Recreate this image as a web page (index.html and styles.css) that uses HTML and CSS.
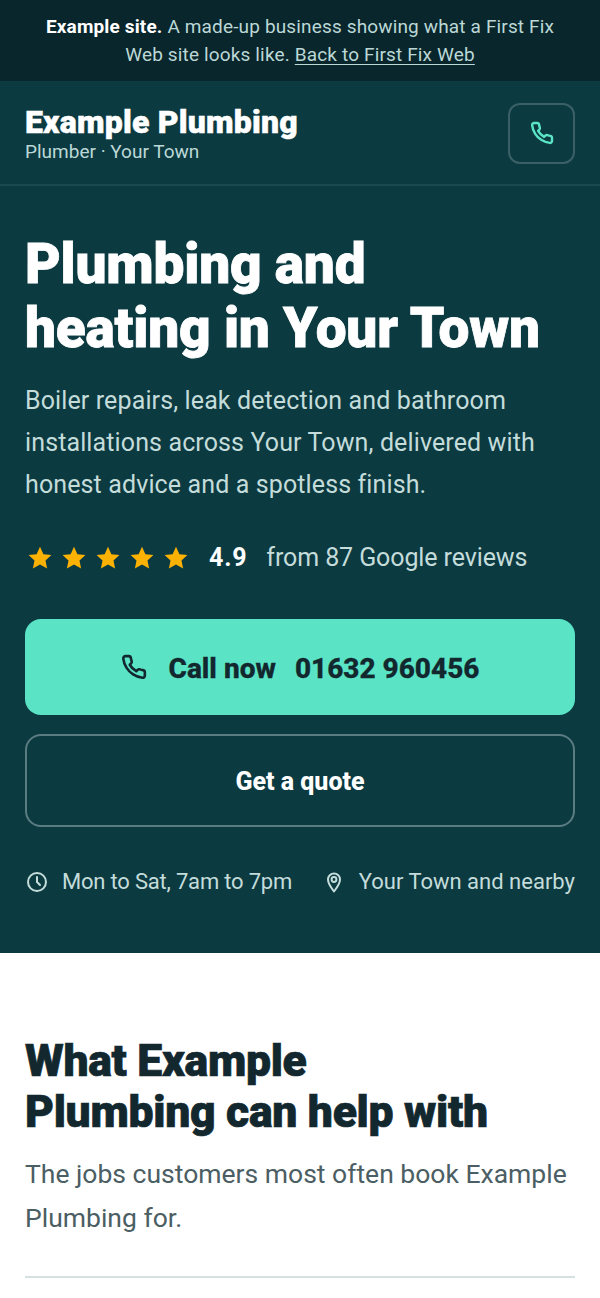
FILE: index.html
```html
<!DOCTYPE html>
<html lang="en">

<head>
    <meta charset="UTF-8">
    <meta name="viewport" content="width=device-width, initial-scale=1.0">
    <title>Example Plumbing</title>
    <link rel="stylesheet" href="styles.css">
</head>

<body>
    <div class="demoBar">
        <strong>Example site.</strong> A made-up business showing what a First Fix Web site looks like. <a href="#">Back to First Fix Web</a>
    </div>

    <header class="siteHeader">
        <div class="brand">
            <div class="brandName">Example Plumbing</div>
            <div class="brandSub">Plumber · Your Town</div>
        </div>
        <a class="headerCall" href="#" aria-label="Call">
            <svg class="icon" width="24" height="24" viewBox="0 0 24 24"><path d="M22 16.92v3a2 2 0 0 1-2.18 2 19.79 19.79 0 0 1-8.63-3.07 19.5 19.5 0 0 1-6-6 19.79 19.79 0 0 1-3.07-8.67A2 2 0 0 1 4.11 2h3a2 2 0 0 1 2 1.72 12.84 12.84 0 0 0 .7 2.81 2 2 0 0 1-.45 2.11L8.09 9.91a16 16 0 0 0 6 6l1.27-1.27a2 2 0 0 1 2.11-.45 12.84 12.84 0 0 0 2.81.7A2 2 0 0 1 22 16.92z"/></svg>
        </a>
    </header>

    <section class="hero">
        <h1>Plumbing and<br>heating in Your Town</h1>
        <p class="heroText">Boiler repairs, leak detection and bathroom installations across Your Town, delivered with honest advice and a spotless finish.</p>

        <div class="rating">
            <div class="stars">
                <svg width="24" height="24" viewBox="0 0 24 24"><path d="M12 0.8l3.4 7.4 8 .9-5.9 5.500 1.600 8L12 18.600l-7.100 4 1.600-8L.6 9.100l8-.9z"/></svg>
                <svg width="24" height="24" viewBox="0 0 24 24"><path d="M12 0.8l3.4 7.4 8 .9-5.9 5.500 1.600 8L12 18.600l-7.100 4 1.600-8L.6 9.100l8-.9z"/></svg>
                <svg width="24" height="24" viewBox="0 0 24 24"><path d="M12 0.8l3.4 7.4 8 .9-5.9 5.500 1.600 8L12 18.600l-7.100 4 1.600-8L.6 9.100l8-.9z"/></svg>
                <svg width="24" height="24" viewBox="0 0 24 24"><path d="M12 0.8l3.4 7.4 8 .9-5.9 5.500 1.600 8L12 18.600l-7.100 4 1.600-8L.6 9.100l8-.9z"/></svg>
                <svg width="24" height="24" viewBox="0 0 24 24"><path d="M12 0.8l3.4 7.4 8 .9-5.9 5.500 1.600 8L12 18.600l-7.100 4 1.600-8L.6 9.100l8-.9z"/></svg>
            </div>
            <strong>4.9</strong>
            <span>from 87 Google reviews</span>
        </div>

        <a class="btn btnCall" href="#">
            <svg class="icon" width="26" height="26" viewBox="0 0 24 24"><path d="M22 16.92v3a2 2 0 0 1-2.18 2 19.79 19.79 0 0 1-8.63-3.07 19.5 19.5 0 0 1-6-6 19.79 19.79 0 0 1-3.07-8.67A2 2 0 0 1 4.11 2h3a2 2 0 0 1 2 1.72 12.84 12.84 0 0 0 .7 2.81 2 2 0 0 1-.45 2.11L8.09 9.91a16 16 0 0 0 6 6l1.27-1.27a2 2 0 0 1 2.11-.45 12.84 12.84 0 0 0 2.81.7A2 2 0 0 1 22 16.92z"/></svg>
            <span class="callLabel">Call now</span>
            <span>01632 960456</span>
        </a>
        <a class="btn btnQuote" href="#">Get a quote</a>

        <div class="meta">
            <div class="metaItem">
                <svg class="icon" width="24" height="24" viewBox="0 0 24 24"><circle cx="12" cy="12" r="9"/><path d="M12 7v5l3 3"/></svg>
                <span>Mon to Sat, 7am to 7pm</span>
            </div>
            <div class="metaItem">
                <svg class="icon" width="24" height="24" viewBox="0 0 24 24"><path d="M12 21.500C8.500 17 6 13.500 6 9.500a6 6 0 0 1 12 0c0 4-2.500 7.500-6 12z"/><circle cx="12" cy="9.500" r="2.400"/></svg>
                <span>Your Town and nearby</span>
            </div>
        </div>
    </section>

    <section class="services">
        <h2>What Example<br>Plumbing can help with</h2>
        <p>The jobs customers most often book Example Plumbing for.</p>
        <hr>
    </section>
</body>

</html>
```

FILE: styles.css
```css
* {
    box-sizing: border-box;
}

body {
    margin: 0;
    background-color: #fff;
    color: #12282e;
    font-family: Roboto, "Liberation Sans", sans-serif;
}

a {
    color: inherit;
}

.icon {
    fill: none;
    stroke: currentColor;
    stroke-width: 2;
    stroke-linecap: round;
    stroke-linejoin: round;
    flex-shrink: 0;
}

/* Top strip */
.demoBar {
    height: 81px;
    padding: 13px 40px 0;
    background-color: #08262c;
    color: #bcd8d6;
    font-size: 19px;
    line-height: 28px;
    letter-spacing: 0.15px;
    text-align: center;
}

.demoBar strong {
    color: #fff;
}

.demoBar a {
    text-underline-offset: 3px;
}

/* Header */
.siteHeader {
    height: 105px;
    padding: 1px 25px 0;
    display: flex;
    justify-content: space-between;
    align-items: center;
    background-color: #0b3a41;
    border-bottom: 2px solid #1a4950;
}

.brand {
    margin-top: 2px;
}

.brandName {
    color: #fff;
    font-size: 32px;
    font-weight: 900;
    line-height: 34px;
    letter-spacing: 0.2px;
    -webkit-text-stroke: 0.5px #fff;
}

.brandSub {
    margin-top: 2px;
    color: #bcd8d6;
    font-size: 19px;
    line-height: 22px;
}

.headerCall {
    width: 67px;
    height: 61px;
    display: flex;
    align-items: center;
    justify-content: center;
    border: 2px solid #3a6066;
    border-radius: 12px;
    color: #5ae4c5;
}

.headerCall .icon {
    stroke-width: 2.4;
}

/* Hero */
.hero {
    height: 767px;
    padding: 46px 25px 0;
    background-color: #0b3a41;
}

h1 {
    margin: 0;
    color: #fff;
    font-size: 55px;
    font-weight: 900;
    line-height: 64px;
    letter-spacing: -0.22px;
    -webkit-text-stroke: 0.8px #fff;
}

.heroText {
    margin: 20px 0 0;
    color: #c4dcda;
    font-size: 25px;
    line-height: 42px;
    letter-spacing: 0.12px;
}

.rating {
    margin-top: 37px;
    display: flex;
    align-items: center;
    font-size: 25px;
    color: #c4dcda;
}

.stars {
    display: flex;
    gap: 10px;
    margin-left: 3px;
    margin-right: 21px;
}

.stars svg {
    fill: #fbb202;
}

.rating strong {
    color: #fff;
    margin-right: 19px;
    letter-spacing: 0.8px;
}

.rating span {
    letter-spacing: -0.1px;
}

.btn {
    display: flex;
    align-items: center;
    justify-content: center;
    padding-top: 2px;
    text-decoration: none;
    font-weight: 800;
}

.btnCall {
    height: 96px;
    margin-top: 47px;
    gap: 19px;
    background-color: #5ae4c5;
    border-radius: 16px;
    color: #12282e;
    font-size: 28px;
    -webkit-text-stroke: 0.3px #12282e;
}

.btnCall .icon {
    stroke-width: 2.400;
    margin-top: -2px;
}

.callLabel {
    margin-left: 3px;
}

.btnQuote {
    height: 93px;
    margin-top: 19px;
    border: 2px solid #5b7c80;
    border-radius: 16px;
    color: #fff;
    font-size: 25px;
}

.meta {
    margin-top: 42px;
    display: flex;
    justify-content: space-between;
    color: #c4dcda;
    font-size: 22px;
}

.metaItem {
    display: flex;
    align-items: center;
    gap: 13px;
}

.metaItem:first-child {
    letter-spacing: -0.2px;
}

/* Services */
.services {
    height: 345px;
    padding: 83px 25px 0;
}

h2 {
    margin: 0;
    color: #12282e;
    font-size: 44.500px;
    font-weight: 900;
    line-height: 51px;
    letter-spacing: -0.3px;
    -webkit-text-stroke: 0.7px #12282e;
}

.services p {
    margin: 14px 0 0;
    color: #4b5e63;
    font-size: 26.500px;
    line-height: 44px;
}

.services hr {
    margin: 36px 0 0;
    border: 0;
    border-top: 2px solid #d5e0e0;
}
```
